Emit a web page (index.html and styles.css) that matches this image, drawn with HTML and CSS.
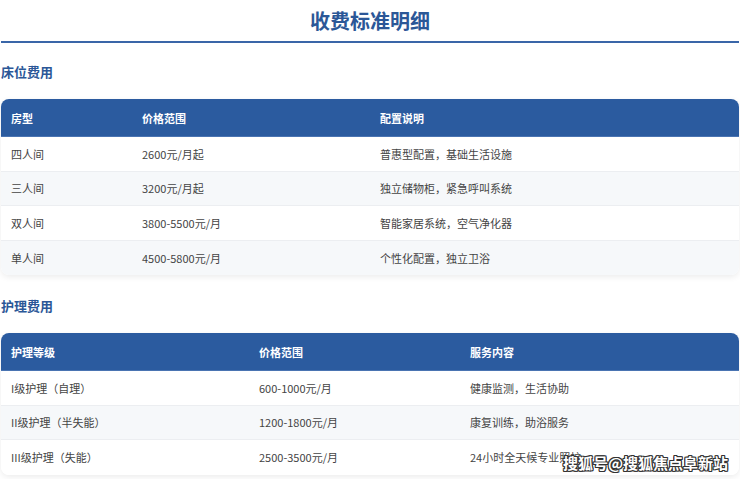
FILE: index.html
```html
<!DOCTYPE html>
<html lang="zh">
<head>
<meta charset="utf-8">
<link rel="stylesheet" href="styles.css">
</head>
<body>
<div class="page">
  <h1 class="title">收费标准明细</h1>
  <section class="section">
    <h2 class="sec-title">床位费用</h2>
    <table class="fee-table bed">
      <thead>
        <tr><th class="c1">房型</th><th class="c2">价格范围</th><th>配置说明</th></tr>
      </thead>
      <tbody>
        <tr><td>四人间</td><td>2600元/月起</td><td>普惠型配置，基础生活设施</td></tr>
        <tr><td>三人间</td><td>3200元/月起</td><td>独立储物柜，紧急呼叫系统</td></tr>
        <tr><td>双人间</td><td>3800-5500元/月</td><td>智能家居系统，空气净化器</td></tr>
        <tr><td>单人间</td><td>4500-5800元/月</td><td>个性化配置，独立卫浴</td></tr>
      </tbody>
    </table>
  </section>
  <section class="section">
    <h2 class="sec-title">护理费用</h2>
    <table class="fee-table care">
      <thead>
        <tr><th class="c1">护理等级</th><th class="c2">价格范围</th><th>服务内容</th></tr>
      </thead>
      <tbody>
        <tr><td>I级护理（自理）</td><td>600-1000元/月</td><td>健康监测，生活协助</td></tr>
        <tr><td>II级护理（半失能）</td><td>1200-1800元/月</td><td>康复训练，助浴服务</td></tr>
        <tr><td>III级护理（失能）</td><td>2500-3500元/月</td><td>24小时全天候专业照护</td></tr>
      </tbody>
    </table>
  </section>
  <div class="watermark">搜狐号@搜狐焦点阜新站</div>
</div>
</body>
</html>
```

FILE: styles.css
```css
* { box-sizing: border-box; }
html, body { margin: 0; padding: 0; background: #fff; }
body {
  font-family: "Noto Sans CJK SC", "Noto Sans", sans-serif;
  color: #333;
}
.page {
  position: relative;
  width: 740px;
  height: 479px;
  overflow: hidden;
  padding: 0 1px 0 1px;
}
.title {
  margin: 0;
  padding: 6px 0 6px;
  font-size: 20px;
  line-height: 29px;
  font-weight: 700;
  color: #2b5797;
  text-align: center;
  border-bottom: 2px solid #3a66a8;
}
.section { margin-top: 19px; }
.section + .section { margin-top: 21px; }
.sec-title {
  margin: 0 0 17px;
  font-size: 13px;
  line-height: 20px;
  font-weight: 700;
  color: #2b5797;
}
.fee-table {
  width: 100%;
  border-collapse: separate;
  border-spacing: 0;
  border-radius: 8px;
  overflow: hidden;
  box-shadow: 0 2px 6px rgba(0,0,0,0.08);
  font-size: 11px;
  table-layout: fixed;
}
.fee-table th {
  background: #2b5b9f;
  color: #fff;
  font-weight: 700;
  text-align: left;
  height: 38px;
  padding: 0 10px;
  border-bottom: 1px solid #4a74b2;
}
.fee-table td {
  height: 34.5px;
  padding: 0 10px;
  color: #444;
  border-bottom: 1px solid #eceef1;
  background: #fff;
}
.fee-table tbody tr:nth-child(even) td { background: #f6f8fa; }
.fee-table tbody tr:last-child td { border-bottom: none; }
.bed .c1 { width: 131px; }
.bed .c2 { width: 238px; }
.care .c1 { width: 248px; }
.care .c2 { width: 211px; }
.watermark {
  position: absolute;
  left: 563px;
  top: 452px;
  white-space: nowrap;
  font-size: 15px;
  line-height: 22px;
  font-weight: 700;
  color: #fff;
  text-shadow: 1px 1px 0 #333, -1px -1px 0 #333, 1px -1px 0 #333, -1px 1px 0 #333, 0 1px 0 #333, 0 -1px 0 #333, 1px 0 0 #333, -1px 0 0 #333;
}
```
